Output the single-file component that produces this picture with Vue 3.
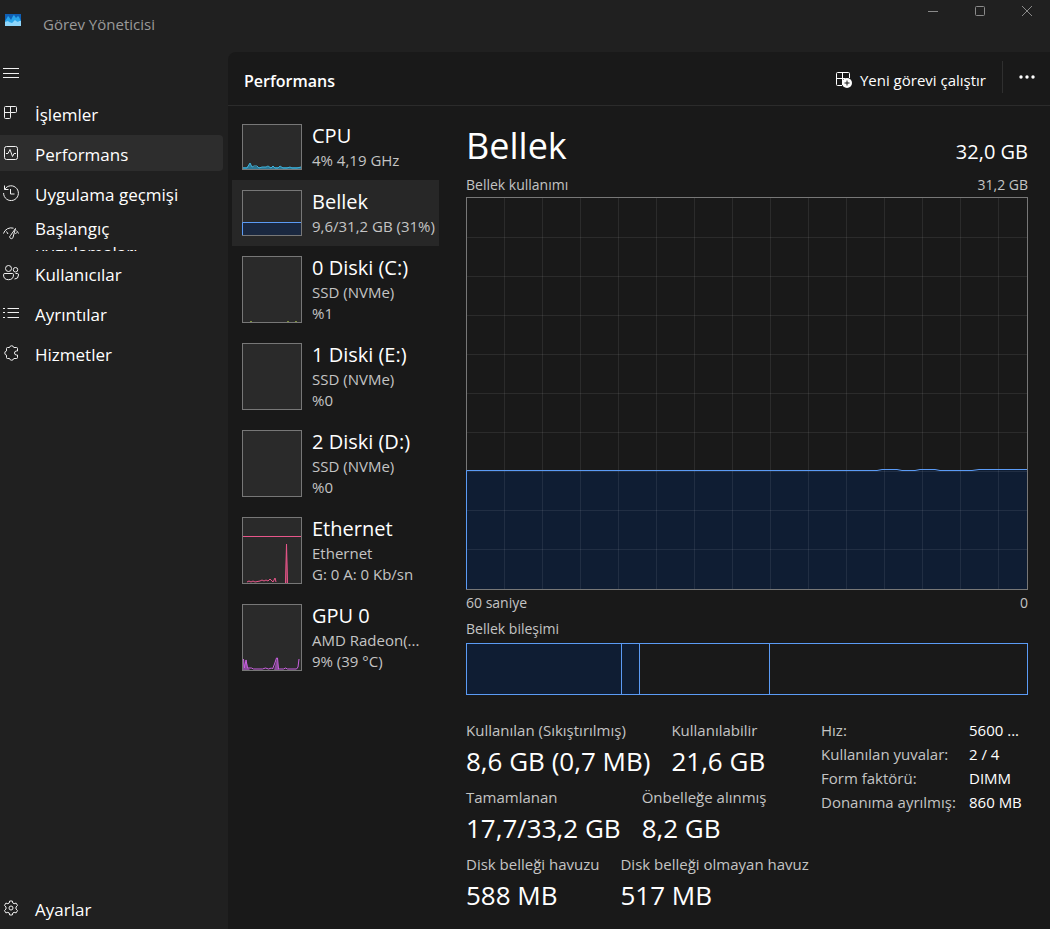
<template>
    <div class="window">
        <header class="titlebar">
            <svg class="app-icon" width="16" height="12" viewBox="0 0 16 12">
                <rect width="16" height="12" fill="#0f5fb4" />
                <path d="M0 7l2-3 1-2 1 1 2 3 2-4 1-1 2 3 2-2 1 1 2 4v5H0z" fill="#2aa5ea" />
                <path d="M0 8l3-1 1 1 3 1 3-3 1 1 2 1 1-1 2 0v5H0z" fill="#8fd6fb" />
            </svg>
            <span class="app-title">Görev Yöneticisi</span>
            <div class="window-controls">
                <button type="button" aria-label="Simge durumuna küçült">
                    <svg width="10" height="10" viewBox="0 0 10 10"><path d="M0 5.5h10" /></svg>
                </button>
                <button type="button" aria-label="Ekranı kapla">
                    <svg width="10" height="10" viewBox="0 0 10 10"><rect x=".5" y=".5" width="9" height="9" rx="1" /></svg>
                </button>
                <button type="button" aria-label="Kapat">
                    <svg width="10" height="10" viewBox="0 0 10 10"><path d="M0 0l10 10M10 0L0 10" /></svg>
                </button>
            </div>
        </header>

        <div class="body">
            <nav class="sidebar">
                <button type="button" class="nav-item" aria-label="Gezintiyi aç">
                    <svg class="nav-icon" viewBox="0 0 16 16"><path d="M0 3.5h16M0 8.5h16M0 12.5h16" /></svg>
                </button>
                <button
                    v-for="item in navItems"
                    :key="item.id"
                    type="button"
                    class="nav-item"
                    :class="{ active: item.id === activePage, wrapped: item.wrapped }"
                    @click="activePage = item.id"
                >
                    <svg class="nav-icon" viewBox="0 0 16 16">
                        <path v-for="d in item.icon" :key="d" :d="d" />
                    </svg>
                    <span class="nav-label">{{ item.label }}</span>
                </button>
            </nav>

            <main class="main">
                <div class="toolbar">
                    <h1>Performans</h1>
                    <button type="button" class="run-task">
                        <svg width="16" height="16" viewBox="0 0 16 16">
                            <path d="M6 13.5H1.5Q.5 13.5 .5 12.5V1.5Q.5 .5 1.5 .5H12.5Q13.5 .5 13.5 1.5V6M.5 6.5H9M6.5 .5V13" fill="none" stroke="#fff" />
                            <circle cx="11" cy="11" r="5" fill="#fff" />
                            <path d="M11 8.5v5M8.5 11h5" stroke="#191919" />
                        </svg>
                        <span>Yeni görevi çalıştır</span>
                    </button>
                    <button type="button" class="more" aria-label="Diğer seçenekler">
                        <svg width="16" height="4" viewBox="0 0 16 4" fill="#fff">
                            <circle cx="2" cy="2" r="1.7" />
                            <circle cx="8" cy="2" r="1.7" />
                            <circle cx="14" cy="2" r="1.7" />
                        </svg>
                    </button>
                </div>

                <div class="content">
                    <div class="device-list">
                        <button
                            v-for="device in devices"
                            :key="device.id"
                            type="button"
                            class="device"
                            :class="{ selected: device.id === activeDevice }"
                            @click="activeDevice = device.id"
                        >
                            <svg class="thumb" :class="{ short: device.lines.length === 1 }" :viewBox="device.lines.length === 1 ? '0 0 58 44' : '0 0 58 65'">
                                <path v-if="device.fill" :d="device.fill" :fill="device.fillColor" />
                                <path v-for="d in device.graph" :key="d" :d="d" fill="none" :stroke="device.color" />
                            </svg>
                            <span class="device-text">
                                <span class="device-name">{{ device.name }}</span>
                                <span v-for="line in device.lines" :key="line" class="device-line">{{ line }}</span>
                            </span>
                        </button>
                    </div>

                    <section class="detail">
                        <div class="detail-head">
                            <h2>Bellek</h2>
                            <span class="total">32,0 GB</span>
                        </div>
                        <div class="caption">
                            <span>Bellek kullanımı</span>
                            <span>31,2 GB</span>
                        </div>
                        <svg class="chart" viewBox="0 0 560 391" preserveAspectRatio="none">
                            <path class="area" d="M0 272.5H410L415 271.5H430L435 272.5H448L453 271.5H468L473 272.5H505L512 271.5H560V391H0z" />
                            <line v-for="n in 14" :key="'v' + n" class="grid" :x1="n * 38 - 0.5" y1="0" :x2="n * 38 - 0.5" y2="391" />
                            <line v-for="n in 9" :key="'h' + n" class="grid" x1="0" :y1="Math.floor(n * 39.1) + 0.5" x2="560" :y2="Math.floor(n * 39.1) + 0.5" />
                            <path class="usage" d="M-0.5 391V272.5H410L415 271.5H430L435 272.5H448L453 271.5H468L473 272.5H505L512 271.5H560" />
                        </svg>
                        <div class="caption axis">
                            <span>60 saniye</span>
                            <span>0</span>
                        </div>
                        <div class="caption axis">
                            <span>Bellek bileşimi</span>
                        </div>
                        <div class="composition">
                            <div
                                v-for="part in composition"
                                :key="part.id"
                                class="part"
                                :class="{ used: part.used }"
                                :style="{ flexGrow: part.size }"
                            ></div>
                        </div>

                        <div class="stats">
                            <div class="stat-rows">
                                <div v-for="(row, i) in stats" :key="i" class="stat-row">
                                    <div v-for="stat in row" :key="stat.label">
                                        <div class="stat-label">{{ stat.label }}</div>
                                        <div class="stat-value">{{ stat.value }}</div>
                                    </div>
                                </div>
                            </div>
                            <dl class="hardware">
                                <template v-for="row in hardware" :key="row.label">
                                    <dt>{{ row.label }}</dt>
                                    <dd>{{ row.value }}</dd>
                                </template>
                            </dl>
                        </div>
                    </section>
                </div>
            </main>
        </div>
    </div>
</template>

<script setup>
import { ref } from "vue";

const activePage = ref("performance");
const activeDevice = ref("memory");

const navItems = [
    {
        id: "processes",
        label: "İşlemler",
        icon: ["M2.5 1.5h10q1 0 1 1v4q0 1-1 1h-5v5q0 1-1 1h-4q-1 0-1-1v-10q0-1 1-1z", "M7.5 1.5v6M1.5 7.5h6"],
    },
    {
        id: "performance",
        label: "Performans",
        icon: [
            "M3.5 1.5h9q2 0 2 2v9q0 2-2 2h-9q-2 0-2-2v-9q0-2 2-2z",
            "M3 8.5h2l2-4 2.5 7 1.5-3h2",
        ],
    },
    {
        id: "history",
        label: "Uygulama geçmişi",
        icon: ["M1.5 .5v4h4M1.7 4.3A7.4 7.4 0 1 1 .6 8", "M7.5 4v5h4"],
    },
    {
        id: "startup",
        label: "Başlangıç uygulamaları",
        wrapped: true,
        icon: [
            "M.5 8.5A8 8 0 0 1 10.5 3.2M13.3 5.5a8 8 0 0 1 2.2 3",
            "M12.5 3.5L7.5 10.500a1.700 1.700 0 1 0 2.600 1.500zM3.500 6.500l1.500 2.500M12.500 9l1-1.500",
        ],
    },
    {
        id: "users",
        label: "Kullanıcılar",
        icon: [
            "M5.5 .5a3 3 0 1 1 0 6 3 3 0 1 1 0-6zM12.5 2.5a2 2 0 1 1 0 4.500 2 2 0 1 1 0-4.500z",
            "M2 8.5h7.5q1 0 1 1.200 0 5-5 5t-5-5Q.5 8.500 2 8.500zM12.500 8.500h2q1 0 1 1.500 0 4-4 4",
        ],
    },
    {
        id: "details",
        label: "Ayrıntılar",
        icon: ["M4.5 3.5H16M4.5 7.5H16M4.5 12.5H16", "M0 3.5h2M0 7.5h2M0 12.5h2"],
    },
    {
        id: "services",
        label: "Hizmetler",
        icon: [
            "M4.5 2.5h2a2.2 2.200 0 0 1 4.300 0H13.500q1 0 1 1v2.500h-1a2 2 0 1 0 0 4h1v2.500q0 1-1 1H10.800a2.200 2.200 0 0 1-4.300 0H4.500q-1 0-1-1v-2.300a2.200 2.200 0 0 1 0-4.300v-2.400q0-1 1-1z",
        ],
    },
    {
        id: "settings",
        label: "Ayarlar",
        icon: [
            "M6.7 1h2.600l.5 2 1.300.7 2-.6 1.400 2.300L13 7v2l1.500 1.600-1.400 2.300-2-.6-1.300.7-.5 2H6.700l-.5-2-1.300-.7-2 .6-1.400-2.300L3 9V7L1.500 5.400l1.400-2.300 2 .6L6.200 3z",
            "M8 6a2 2 0 1 1 0 4 2 2 0 1 1 0-4z",
        ],
    },
];

const devices = [
    {
        id: "cpu",
        name: "CPU",
        lines: ["4% 4,19 GHz"],
        color: "#3fb1d8",
        fill: "M0 42h58v2H0zM4 42l3-4 2 4z",
        fillColor: "#2c7896",
        graph: ["M0 43h4l3-5 2 4 2-1h3l2 2 3-1h4l2-1 3 2 2-2 2 2h3l2-2 3 2h4l3-1 2 1h5l4-1"],
    },
    {
        id: "memory",
        name: "Bellek",
        lines: ["9,6/31,2 GB (31%)"],
        color: "#5b9bf5",
        fill: "M0 31.5h58V44H0z",
        fillColor: "#1a2840",
        graph: ["M-0.5 44V31.5H58"],
    },
    {
        id: "disk0",
        name: "0 Diski (C:)",
        lines: ["SSD (NVMe)", "%1"],
        color: "#7c8f3c",
        graph: ["M7 64.5h2M44 64.5h2M52 64.5h2"],
    },
    { id: "disk1", name: "1 Diski (E:)", lines: ["SSD (NVMe)", "%0"] },
    { id: "disk2", name: "2 Diski (D:)", lines: ["SSD (NVMe)", "%0"] },
    {
        id: "ethernet",
        name: "Ethernet",
        lines: ["Ethernet", "G: 0 A: 0 Kb/sn"],
        color: "#e8568a",
        fill: "M42 65l1.5-39 1.5 39z",
        fillColor: "#7d3a52",
        graph: ["M0 18.5h58", "M4 64l2-1 2 1 2-1 2 1 5-1 2-1 2 1 2-1 2 1 2-2 2 2 1 1 2-4 1 4M42.5 65l1-39 1 39"],
    },
    {
        id: "gpu",
        name: "GPU 0",
        lines: ["AMD Radeon(...", "9% (39 °C)"],
        color: "#cb61e2",
        fill: "M0 65V54l2 9 1-9 2 9 2 2zM31 65l3-12 2 12z",
        fillColor: "#8a4a9a",
        graph: ["M.5 54l1 9 1.5-8 1.5 8h4l2 1h9l3-1 3 1 3-1 1 1 2-5 2-6h1l1 11h5l2-1 2 1h9l1.500-2 1-8"],
    },
];

// widths in proportion to the memory each part holds
const composition = [
    { id: "in-use", size: 154, used: true },
    { id: "modified", size: 17, used: true },
    { id: "standby", size: 129 },
    { id: "free", size: 257 },
];

const stats = [
    [
        { label: "Kullanılan (Sıkıştırılmış)", value: "8,6 GB (0,7 MB)" },
        { label: "Kullanılabilir", value: "21,6 GB" },
    ],
    [
        { label: "Tamamlanan", value: "17,7/33,2 GB" },
        { label: "Önbelleğe alınmış", value: "8,2 GB" },
    ],
    [
        { label: "Disk belleği havuzu", value: "588 MB" },
        { label: "Disk belleği olmayan havuz", value: "517 MB" },
    ],
];

const hardware = [
    { label: "Hız:", value: "5600 ..." },
    { label: "Kullanılan yuvalar:", value: "2 / 4" },
    { label: "Form faktörü:", value: "DIMM" },
    { label: "Donanıma ayrılmış:", value: "860 MB" },
];
</script>

<style>
body {
    margin: 0;
    background: #202020;
}
</style>

<style scoped>
.window {
    display: flex;
    flex-direction: column;
    min-height: 100vh;
    background: #202020;
    color: #fff;
    font-family: "Open Sans", "Noto Sans", sans-serif;
    font-size: 15px;
}

button {
    border: 0;
    padding: 0;
    background: none;
    color: inherit;
    font: inherit;
    text-align: left;
}

h1,
h2,
dl,
dd {
    margin: 0;
    font-weight: 400;
}

.titlebar {
    display: flex;
    align-items: flex-start;
    height: 52px;
}

.app-icon {
    margin: 14px 22px 0 5px;
}

.app-title {
    margin-top: 12px;
    line-height: 24px;
    color: #9a9a9a;
}

.window-controls {
    display: flex;
    margin-left: auto;
}

.window-controls button {
    display: flex;
    align-items: center;
    justify-content: center;
    width: 47px;
    height: 22px;
}

.window-controls svg {
    fill: none;
    stroke: #8a8a8a;
}

.body {
    display: flex;
    flex: 1;
}

.sidebar {
    display: flex;
    flex-direction: column;
    gap: 4px;
    flex: 0 0 223px;
    padding: 3px 5px 3px 0;
}

.nav-item {
    display: flex;
    align-items: center;
    gap: 16px;
    height: 36px;
    padding-left: 3px;
    border-radius: 0 4px 4px 0;
    overflow: hidden;
    font-size: 17px;
    line-height: 24px;
}

.nav-item.active {
    background: #2d2d2d;
}

.nav-item:last-child {
    margin-top: auto;
}

.nav-icon {
    flex: none;
    width: 16px;
    height: 16px;
    fill: none;
    stroke: #f0f0f0;
}

.nav-label {
    padding-top: 4px;
}

/* the second line runs out of the fixed item height */
.nav-item.wrapped .nav-label {
    align-self: flex-start;
    padding: 2px 40px 0 0;
}

.main {
    flex: 1;
    min-width: 0;
    background: #191919;
    border-top-left-radius: 8px;
}

.toolbar {
    display: flex;
    align-items: center;
    height: 53px;
    padding-left: 16px;
    border-bottom: 1px solid #2b2b2b;
}

.toolbar h1 {
    padding-top: 4px;
    font-size: 16px;
    font-weight: 600;
    line-height: 24px;
}

.run-task {
    display: flex;
    align-items: center;
    gap: 8px;
    margin-left: auto;
    padding: 2px 16px 0 0;
    line-height: 24px;
}

.more {
    display: flex;
    align-items: center;
    justify-content: center;
    width: 48px;
    height: 32px;
    margin-bottom: 4px;
    border-left: 1px solid #2f2f2f;
}

.content {
    display: flex;
}

.device-list {
    flex: 0 0 207px;
    padding: 8px 0 0 4px;
}

.device {
    display: flex;
    gap: 10px;
    width: 100%;
    padding: 9px 0 9px 10px;
    white-space: nowrap;
}

.device.selected {
    background: #272727;
}

.thumb {
    flex: none;
    width: 58px;
    height: 65px;
    margin-top: 1px;
    border: 1px solid #777;
    background: #2a2a2a;
    overflow: visible;
}

.thumb.short {
    height: 44px;
}

.device-text {
    display: flex;
    flex-direction: column;
    min-width: 0;
}

.device-name {
    padding-bottom: 2px;
    font-size: 20px;
    line-height: 25px;
}

.device-line {
    line-height: 21px;
    color: #c4c4c4;
}

.detail {
    flex: 1;
    min-width: 0;
    padding: 13px 22px 12px 27px;
}

.detail-head {
    display: flex;
    align-items: baseline;
    justify-content: space-between;
}

.detail-head h2 {
    font-size: 36px;
    line-height: 54px;
}

.total {
    font-size: 20px;
}

.caption {
    display: flex;
    justify-content: space-between;
    font-size: 14px;
    line-height: 24px;
    color: #c4c4c4;
}

.caption.axis {
    line-height: 26px;
}

.chart {
    display: block;
    box-sizing: border-box;
    width: 100%;
    height: 393px;
    border: 1px solid #777;
    overflow: visible;
}

.area {
    fill: #0f1d33;
}

.grid {
    stroke: #fff;
    stroke-opacity: 0.08;
    vector-effect: non-scaling-stroke;
}

.usage {
    fill: none;
    stroke: #5b9bf5;
    vector-effect: non-scaling-stroke;
}

.composition {
    display: flex;
    height: 50px;
    margin: 1px 0 23px;
    border: 1px solid #5b9bf5;
}

.part {
    flex: 0 0 0;
    box-sizing: border-box;
    border-right: 1px solid #5b9bf5;
}

.part:last-child {
    border-right: 0;
}

.part.used {
    background: #0f1d33;
}

.stats {
    display: flex;
    white-space: nowrap;
}

.stat-rows {
    display: flex;
    flex: 0 0 355px;
    flex-direction: column;
    gap: 5px;
}

.stat-row {
    display: flex;
    gap: 21px;
}

.stat-label {
    line-height: 24px;
    color: #c4c4c4;
}

.stat-value {
    font-size: 26px;
    line-height: 38px;
}

.hardware {
    display: grid;
    grid-template-columns: 148px auto;
    align-content: start;
    line-height: 24px;
}

.hardware dt {
    color: #c4c4c4;
}
</style>
